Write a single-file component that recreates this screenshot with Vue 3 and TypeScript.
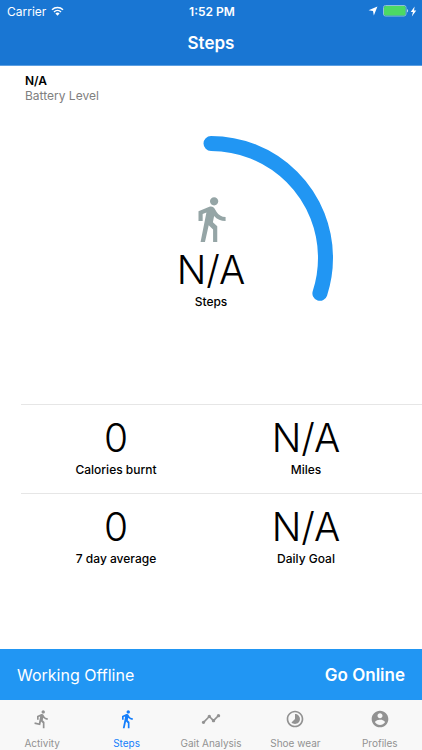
<script setup lang="ts">
import { ref } from 'vue'

interface Stat {
  value: string
  label: string
}

interface Tab {
  label: string
  icon: string
}

const walkIcon =
  'M13.5 5.5c1.1 0 2-.9 2-2s-.9-2-2-2-2 .9-2 2 .9 2 2 2zM9.8 8.9L7 23h2.1l1.8-8 2.1 2v6h2v-7.5l-2.1-2 .6-3C14.8 12 16.8 13 19 13v-2c-1.9 0-3.5-1-4.3-2.4l-1-1.6c-.4-.6-1-1-1.7-1-.3 0-.5.1-.8.1L6 8.3V13h2V9.6l1.8-.7z'

const statRows: Stat[][] = [
  [
    { value: '0', label: 'Calories burnt' },
    { value: 'N/A', label: 'Miles' },
  ],
  [
    { value: '0', label: '7 day average' },
    { value: 'N/A', label: 'Daily Goal' },
  ],
]

const tabs: Tab[] = [
  {
    label: 'Activity',
    icon: 'M13.49 5.48c1.1 0 2-.9 2-2s-.9-2-2-2-2 .9-2 2 .9 2 2 2zm-3.6 13.9l1-4.4 2.1 2v6h2v-7.5l-2.1-2 .6-3c1.3 1.5 3.3 2.5 5.5 2.5v-2c-1.9 0-3.5-1-4.3-2.4l-1-1.6c-.4-.6-1-1-1.7-1-.3 0-.5.1-.8.1l-5.2 2.2v4.7h2v-3.4l1.8-.7-1.6 8.1-4.9-1-.4 2 7 1.4z',
  },
  { label: 'Steps', icon: walkIcon },
  {
    label: 'Gait Analysis',
    icon: 'M23 8c0 1.1-.9 2-2 2-.18 0-.35-.02-.51-.07l-3.56 3.55c.05.16.07.34.07.52 0 1.1-.9 2-2 2s-2-.9-2-2c0-.18.02-.36.07-.52l-2.55-2.55c-.16.05-.34.07-.52.07s-.36-.02-.52-.07l-4.55 4.56c.05.16.07.33.07.51 0 1.1-.9 2-2 2s-2-.9-2-2 .9-2 2-2c.18 0 .35.02.51.07l4.56-4.55C8.02 9.36 8 9.18 8 9c0-1.1.9-2 2-2s2 .9 2 2c0 .18-.02.36-.07.52l2.55 2.55c.16-.05.34-.07.52-.07s.36.02.52.07l3.55-3.56C19.02 8.35 19 8.18 19 8c0-1.1.9-2 2-2s2 .9 2 2z',
  },
  {
    label: 'Shoe wear',
    icon: 'M16.24 7.76C15.07 6.59 13.54 6 12 6v6l-4.24 4.24c2.34 2.34 6.14 2.34 8.49 0 2.34-2.34 2.34-6.14-.01-8.48zM12 2C6.48 2 2 6.48 2 12s4.48 10 10 10 10-4.48 10-10S17.52 2 12 2zm0 18c-4.42 0-8-3.58-8-8s3.58-8 8-8 8 3.58 8 8-3.58 8-8 8z',
  },
  {
    label: 'Profiles',
    icon: 'M12 2C6.48 2 2 6.48 2 12s4.48 10 10 10 10-4.48 10-10S17.52 2 12 2zm0 3c1.66 0 3 1.34 3 3s-1.34 3-3 3-3-1.34-3-3 1.34-3 3-3zm0 14.2c-2.5 0-4.71-1.28-6-3.22.03-1.99 4-3.08 6-3.08 1.99 0 5.97 1.09 6 3.08-1.29 1.94-3.5 3.22-6 3.22z',
  },
]

const activeTab = ref('Steps')
</script>

<template>
  <div class="screen">
    <header class="header">
      <div class="status">
        <div class="status-side">
          <span>Carrier</span>
          <svg class="wifi" viewBox="0 0 26 20" aria-hidden="true">
            <path d="M2 7.5a16 16 0 0 1 22 0M6 12a10 10 0 0 1 14 0" />
            <path class="solid" d="M13 19.5l-4.2-4.6a6 6 0 0 1 8.4 0z" />
          </svg>
        </div>
        <span class="clock">1:52 PM</span>
        <div class="status-side status-end">
          <svg class="locate" viewBox="0 0 18 18" aria-hidden="true">
            <path d="M17 1L10.500 17l-1.500-8-8-1.500z" />
          </svg>
          <svg class="battery" viewBox="0 0 52 24" aria-hidden="true">
            <rect class="shell" x="1" y="1" width="45" height="21" rx="4" />
            <rect class="charge" x="2" y="2" width="43" height="19" rx="3" />
            <path class="cap" d="M48 8c3 1 3 6 0 7z" />
          </svg>
          <svg class="bolt" viewBox="0 0 12 20" aria-hidden="true">
            <path d="M8 1L1 11h4l-2 8 8-11H7z" />
          </svg>
        </div>
      </div>
      <h1 class="title">Steps</h1>
    </header>

    <main class="content">
      <div class="device">
        <strong>N/A</strong>
        <span>Battery Level</span>
      </div>

      <section class="gauge">
        <svg class="ring" viewBox="0 0 244 244" aria-hidden="true">
          <circle cx="122" cy="122" r="114.500" pathLength="100" />
        </svg>
        <div class="gauge-body">
          <svg class="walker" viewBox="0 0 24 24" aria-hidden="true">
            <path :d="walkIcon" />
          </svg>
          <span class="value">N/A</span>
          <span class="label">Steps</span>
        </div>
      </section>

      <section class="stats">
        <div v-for="(row, index) in statRows" :key="index" class="stat-row">
          <div v-for="stat in row" :key="stat.label" class="stat">
            <span class="value">{{ stat.value }}</span>
            <span class="label">{{ stat.label }}</span>
          </div>
        </div>
      </section>
    </main>

    <div class="connection">
      <span class="mode">Working Offline</span>
      <button type="button" class="online">Go Online</button>
    </div>

    <nav class="tabs">
      <button
        v-for="tab in tabs"
        :key="tab.label"
        type="button"
        class="tab"
        :class="{ active: tab.label === activeTab }"
        @click="activeTab = tab.label"
      >
        <svg class="tab-icon" viewBox="0 0 24 24" aria-hidden="true">
          <path :d="tab.icon" />
        </svg>
        <span>{{ tab.label }}</span>
      </button>
    </nav>
  </div>
</template>

<style>
body {
  margin: 0;
  background: #fff;
}
</style>

<style scoped>
.screen {
  display: flex;
  flex-direction: column;
  min-height: 100vh;
  font-family: Inter, 'Liberation Sans', sans-serif;
  color: #000;
}

button {
  padding: 0;
  border: 0;
  background: none;
  font: inherit;
  color: inherit;
  cursor: pointer;
}

.header {
  background: #1976d3;
  border-bottom: 1px solid #5c9fe2;
  color: #fff;
}

.status {
  display: grid;
  grid-template-columns: 1fr auto 1fr;
  align-items: center;
  height: 22px;
  padding: 0 5px 0 7px;
  font-size: 12px;
}

.status-side {
  display: flex;
  align-items: center;
  gap: 5px;
}

.status-end {
  justify-content: flex-end;
  gap: 4px;
}

.clock {
  font-weight: 600;
}

.wifi {
  width: 13px;
  height: 10px;
  fill: none;
  stroke: #fff;
  stroke-width: 3;
}

.wifi .solid {
  fill: #fff;
  stroke: none;
}

.locate {
  width: 10px;
  height: 10px;
  margin-right: 1px;
  fill: #fff;
}

.battery {
  width: 26px;
  height: 12px;
}

.shell {
  fill: none;
  stroke: #8fc0d8;
  stroke-width: 2;
}

.charge {
  fill: #4cd964;
}

.cap {
  fill: #b5d4f2;
}

.bolt {
  width: 7px;
  height: 11px;
  margin-left: -3px;
  fill: #fff;
}

.title {
  margin: 0;
  height: 43px;
  font-size: 17px;
  font-weight: 600;
  line-height: 43px;
  text-align: center;
}

.content {
  flex: 1;
}

.device {
  display: flex;
  flex-direction: column;
  padding: 7px 25px 0;
  font-size: 12px;
  line-height: 15px;
}

.device strong {
  font-weight: 600;
}

.device span {
  color: #808080;
}

.gauge {
  display: grid;
  place-items: center;
  padding: 33px 0 24px;
}

.gauge > * {
  grid-area: 1 / 1;
}

.ring {
  width: 244px;
  height: 244px;
  fill: none;
  stroke: #2196f3;
  stroke-width: 15;
  stroke-linecap: round;
  stroke-dasharray: 30 100;
  transform: rotate(-90deg);
}

.gauge-body {
  display: flex;
  flex-direction: column;
  align-items: center;
  padding-bottom: 12px;
}

.walker {
  width: 50px;
  height: 50px;
  margin-bottom: 2px;
  fill: #95a5a6;
}

.value {
  font-size: 39px;
  font-weight: 300;
  line-height: 48px;
}

.label {
  font-size: 12px;
  font-weight: 500;
  line-height: 16px;
}

.stats {
  margin-left: 21px;
}

.stat-row {
  display: grid;
  grid-template-columns: 1fr 1fr;
  padding: 9px 21px 15px 0;
  border-top: 1px solid #e6e6e6;
}

.stat {
  display: flex;
  flex-direction: column;
  align-items: center;
}

.connection {
  display: flex;
  align-items: center;
  justify-content: space-between;
  height: 51px;
  padding: 0 17px;
  background: #2196f3;
  color: #fff;
}

.mode {
  font-size: 16px;
}

.online {
  font-size: 17px;
  font-weight: 600;
}

.tabs {
  display: grid;
  grid-template-columns: repeat(5, 1fr);
  height: 50px;
  background: #f8f8f8;
}

.tab {
  display: flex;
  flex-direction: column;
  align-items: center;
  justify-content: flex-start;
  gap: 7px;
  padding-top: 9px;
  color: #929292;
  font-size: 10px;
  line-height: 14px;
  white-space: nowrap;
}

.tab.active {
  color: #147efb;
}

.tab-icon {
  width: 20px;
  height: 20px;
  fill: currentColor;
}
</style>
